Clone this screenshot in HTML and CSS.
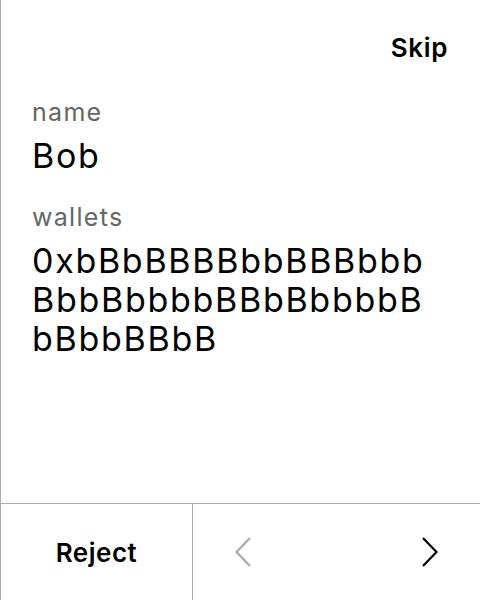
FILE: index.html
```html
<!DOCTYPE html>
<html>
<head>
<meta charset="utf-8">
<link rel="stylesheet" href="styles.css">
</head>
<body>
<div class="screen">
  <div class="content">
    <div class="header">
      <span class="skip">Skip</span>
    </div>
    <div class="field field-name">
      <div class="label">name</div>
      <div class="value">Bob</div>
    </div>
    <div class="field field-wallets">
      <div class="label">wallets</div>
      <div class="value">0xbBbBBBBbbBBBbbbBbbBbbbbBBbBbbbbBbBbbBBbB</div>
    </div>
  </div>
  <div class="footer">
    <div class="reject">Reject</div>
    <div class="nav">
      <svg class="chev chev-prev" width="16" height="30" viewBox="0 0 16 30"><polyline points="15,1 1.5,15 15,29" fill="none" stroke="currentColor" stroke-width="2.2"/></svg>
      <svg class="chev chev-next" width="16" height="30" viewBox="0 0 16 30"><polyline points="1,1 14.5,15 1,29" fill="none" stroke="currentColor" stroke-width="2.2"/></svg>
    </div>
  </div>
</div>
</body>
</html>
```
FILE: styles.css
```css
html, body {
  margin: 0;
  padding: 0;
  background: #fff;
}
body {
  font-family: Inter, "Noto Sans", sans-serif;
  color: #000;
}
.screen {
  width: 480px;
  height: 600px;
  box-sizing: border-box;
  border-left: 1px solid #aaa;
  display: flex;
  flex-direction: column;
}
.content {
  flex: 1;
  padding: 30px 32px 0 31px;
}
.header {
  display: flex;
  justify-content: flex-end;
}
.skip {
  font-size: 26px;
  font-weight: 600;
  line-height: 36px;
  letter-spacing: 0.6px;
}
.field-name {
  margin-top: 30px;
}
.field-wallets {
  margin-top: 26px;
}
.label {
  font-size: 25px;
  line-height: 32px;
  letter-spacing: 1.3px;
  color: #666;
  margin-bottom: 8px;
}
.value {
  font-size: 34px;
  line-height: 39px;
  letter-spacing: 1.7px;
  word-break: break-all;
  margin-right: 8px;
}
.footer {
  height: 96px;
  border-top: 1px solid #aaa;
  display: flex;
}
.reject {
  width: 191px;
  border-right: 1px solid #aaa;
  display: flex;
  align-items: center;
  justify-content: center;
  font-size: 26px;
  font-weight: 600;
  letter-spacing: 0.5px;
}
.nav {
  flex: 1;
  display: flex;
  align-items: center;
  justify-content: space-between;
  padding: 0 42px;
}
.chev-prev { color: #aaa; }
.chev-next { color: #000; }
```
